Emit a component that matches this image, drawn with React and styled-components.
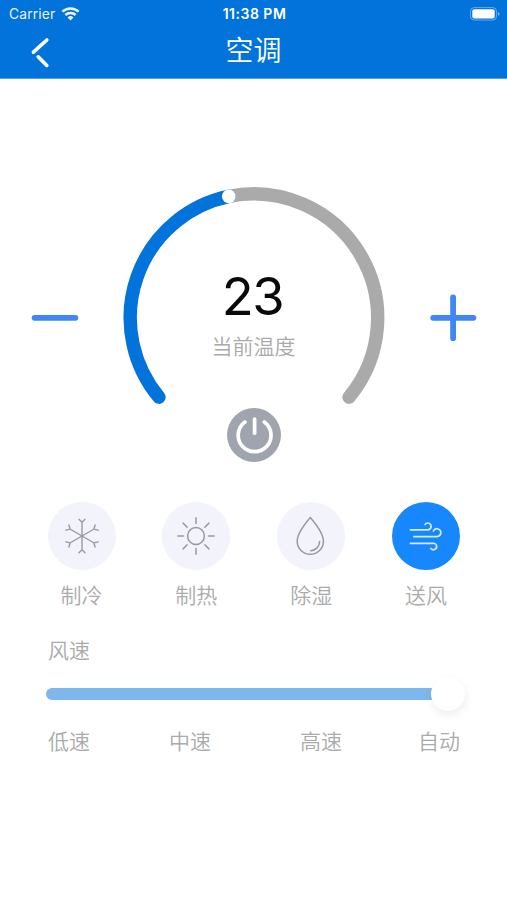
import React from 'react'
import styled, { createGlobalStyle, ThemeProvider } from 'styled-components'

const theme = {
    primary: '#0173db',
    accent: '#3e87f5',
    active: '#1787fd',
    track: '#7eb7eb',
    gray: '#aaaaaa',
    cjk: '"Noto Sans CJK SC", sans-serif',
    latin: 'Inter, "Noto Sans CJK SC", sans-serif',
};

const GlobalStyle = createGlobalStyle`
    * {
        box-sizing: border-box;
    }

    body {
        margin: 0;
        background: #ffffff;
    }

    svg {
        display: block;
    }
`;

const Screen = styled.div`
    width: 507px;
    height: 900px;
    overflow: hidden;
    background: #ffffff;
    font-family: ${props => props.theme.cjk};
    font-weight: 350;
`;

const Header = styled.header`
    height: 79px;
    background: ${props => props.theme.primary};
    color: #ffffff;
    border-bottom: 1px solid #4d9fe6;
`;

const StatusBar = styled.div`
    height: 27px;
    padding: 0 7px 0 9px;
    display: grid;
    grid-template-columns: 1fr auto 1fr;
    align-items: center;
    font-family: ${props => props.theme.latin};
`;

const Carrier = styled.div`
    display: flex;
    align-items: center;
    gap: 6px;
    font-size: 13.8px;
    font-weight: 400;
    letter-spacing: 0.15px;
    opacity: 0.92;
`;

const Clock = styled.div`
    font-size: 14px;
    font-weight: 600;
    letter-spacing: 0.5px;
`;

const Battery = styled.svg`
    justify-self: end;
`;

const NavBar = styled.div`
    height: 51px;
    padding: 0 30px;
    display: grid;
    grid-template-columns: 1fr auto 1fr;
    align-items: center;
`;

const BackButton = styled.button`
    width: 20px;
    height: 32px;
    padding: 0;
    border: 0;
    background: none;
`;

const Title = styled.h1`
    margin: 0 0 7px;
    font-size: 28px;
    line-height: 40px;
    font-weight: 350;
`;

const GaugeRow = styled.section`
    height: 220px;
    margin-top: 107px;
    padding: 0 29px;
    display: flex;
    justify-content: space-between;
`;

const StepButton = styled.button`
    width: 52px;
    height: 52px;
    margin-top: 106px;
    padding: 0;
    border: 0;
    background: none;
`;

const Gauge = styled.div`
    width: 264px;
    height: 220px;
    display: grid;

    > * {
        grid-area: 1 / 1;
    }
`;

const Reading = styled.div`
    padding-top: 80px;
    text-align: center;
`;

const Degrees = styled.div`
    height: 60px;
    padding-right: 2px;
    line-height: 60px;
    font-family: ${props => props.theme.latin};
    font-size: 52.5px;
    font-weight: 400;
    letter-spacing: -1.4px;
    color: #0a0a0a;
`;

const Caption = styled.div`
    height: 40px;
    line-height: 38px;
    font-size: 21px;
    color: ${props => props.theme.gray};
`;

const PowerButton = styled.button`
    display: block;
    width: 54px;
    height: 54px;
    margin: 2px auto 0;
    padding: 0;
    border: 0;
    border-radius: 50%;
    background: #9fa4af;
`;

const Modes = styled.section`
    margin-top: 40px;
    padding: 0 46.5px 0 47px;
    display: flex;
    justify-content: space-between;
`;

const Mode = styled.div`
    width: 69px;
    display: flex;
    flex-direction: column;
    align-items: center;
`;

const ModeIcon = styled.div`
    width: 68px;
    height: 68px;
    border-radius: 50%;
    background: ${props => props.$active ? props.theme.active : '#f3f4fb'};
    color: ${props => props.$active ? '#d9ebff' : '#999a9e'};
`;

const ModeLabel = styled.div`
    margin-top: 9px;
    font-size: 21px;
    line-height: 30px;
    color: ${props => props.theme.gray};
`;

const Speed = styled.section`
    margin-top: 25px;
    padding: 0 41px 0 46px;
`;

const SpeedTitle = styled.div`
    padding-left: 2px;
    font-size: 21px;
    line-height: 30px;
    color: ${props => props.theme.gray};
`;

const Slider = styled.div`
    height: 34px;
    margin-top: 13px;
    display: flex;
    align-items: center;
`;

const Fill = styled.div`
    width: 400px;
    height: 12.5px;
    margin-right: -15px;
    border-radius: 6.25px;
    background: ${props => props.theme.track};
`;

const Thumb = styled.div`
    width: 34px;
    height: 34px;
    border-radius: 50%;
    background: #ffffff;
    box-shadow: 1px 4px 10px rgba(0, 0, 0, 0.07);
`;

const Levels = styled.div`
    margin-top: 14px;
    padding-left: 2px;
    display: grid;
    grid-template-columns: 121px 131px 118px auto;
    font-size: 21px;
    line-height: 30px;
    white-space: nowrap;
    color: ${props => props.theme.gray};
`;

const Snow = () => (
    <svg width="68" height="68" fill="none" stroke="currentColor" strokeWidth="1.4" strokeLinecap="round">
        {[0, 60, 120, 180, 240, 300].map(angle => (
            <path key={angle} transform={`rotate(${angle} 34 34)`} d="M34 34V20M31 17.2L34 20.2L37 17.2" />
        ))}
    </svg>
);

const Sun = () => (
    <svg width="68" height="68" fill="none" stroke="currentColor" strokeWidth="1.5" strokeLinecap="round">
        <circle cx="34" cy="34" r="8.4" />
        {[0, 45, 90, 135, 180, 225, 270, 315].map(angle => (
            <path key={angle} transform={`rotate(${angle} 34 34)`} d="M34 21.5V15.8" />
        ))}
    </svg>
);

const Drop = () => (
    <svg width="68" height="68" fill="none" stroke="currentColor" strokeWidth="1.5" strokeLinecap="round" strokeLinejoin="round">
        <path d="M33.3 15.6C30.4 19 20.2 31.4 20.2 39.2A13.1 13.1 0 0 0 46.4 39.2C46.4 31.4 36.2 19 33.3 15.6Z" />
        <path d="M42.6 39.6C42.6 44.6 38.8 48.2 33.8 48.8" />
    </svg>
);

const Wind = () => (
    <svg width="68" height="68" fill="none" stroke="currentColor" strokeWidth="1.7" strokeLinecap="round">
        <path d="M18.4 27.8H35.6A3.4 3.4 0 1 0 33 22.4" />
        <path d="M21.9 34.6H45A3.9 3.9 0 1 0 41.4 29" />
        <path d="M18.4 41.3H41A3.2 3.2 0 1 1 38.9 46.4" />
    </svg>
);

const modes = [
    { label: '制冷', icon: <Snow /> },
    { label: '制热', icon: <Sun /> },
    { label: '除湿', icon: <Drop /> },
    { label: '送风', icon: <Wind />, active: true },
];

const levels = ['低速', '中速', '高速', '自动'];

const App = () => (
    <ThemeProvider theme={theme}>
        <GlobalStyle />
        <Screen>
            <Header>
                <StatusBar>
                    <Carrier>
                        Carrier
                        <svg width="19" height="14" viewBox="0 0 19 14" fill="none" stroke="#fff" strokeWidth="2.5">
                            <path d="M1.4 4.7A11.6 11.6 0 0 1 17.6 4.7" />
                            <path d="M4.4 8A7.2 7.2 0 0 1 14.6 8" />
                            <path d="M9.5 13.4L6.6 10.4A4.1 4.1 0 0 1 12.4 10.4Z" fill="#fff" stroke="none" />
                        </svg>
                    </Carrier>
                    <Clock>11:38 PM</Clock>
                    <Battery width="30" height="14">
                        <rect x="0.5" y="0.6" width="26" height="12.4" rx="3.6" fill="none" stroke="#fff" strokeOpacity="0.4" />
                        <rect x="2.3" y="2.2" width="22.4" height="9.2" rx="2" fill="#fff" />
                        <path d="M28 5Q29.6 5.8 29.6 6.9T28 8.8Z" fill="#fff" fillOpacity="0.5" />
                    </Battery>
                </StatusBar>
                <NavBar>
                    <BackButton aria-label="back">
                        <svg width="20" height="32" fill="none" stroke="#fff" strokeWidth="3.6" strokeLinecap="round">
                            <path d="M16.8 3L3.4 15.2" />
                            <path d="M8.2 19.8L16.8 28.4" />
                        </svg>
                    </BackButton>
                    <Title>空调</Title>
                </NavBar>
            </Header>
            <GaugeRow>
                <StepButton aria-label="minus">
                    <svg width="52" height="52" stroke={theme.accent} strokeWidth="5.8" strokeLinecap="round">
                        <path d="M5.6 25.8H46.4" />
                    </svg>
                </StepButton>
                <Gauge>
                    <svg width="264" height="220" fill="none" strokeWidth="13.4" strokeLinecap="round">
                        <path d="M106.8 10.4A124 124 0 0 1 227 211.2" stroke={theme.gray} />
                        <path d="M37 211.2A124 124 0 0 1 106.8 10.4" stroke={theme.primary} />
                        <circle cx="106.8" cy="10.4" r="6.8" fill="#fff" />
                    </svg>
                    <Reading>
                        <Degrees>23</Degrees>
                        <Caption>当前温度</Caption>
                    </Reading>
                </Gauge>
                <StepButton aria-label="plus">
                    <svg width="52" height="52" stroke={theme.accent} strokeWidth="5.8" strokeLinecap="round">
                        <path d="M7.2 25.8H47.4M27.1 5.4V46.2" />
                    </svg>
                </StepButton>
            </GaugeRow>
            <PowerButton aria-label="power">
                <svg width="54" height="54" fill="none" stroke="#fff" strokeWidth="3.7" strokeLinecap="round">
                    <path d="M17.9 14A16.4 16.4 0 1 0 37.3 14" />
                    <path d="M27.6 11.2V25.2" />
                </svg>
            </PowerButton>
            <Modes>
                {modes.map(mode => (
                    <Mode key={mode.label}>
                        <ModeIcon $active={mode.active}>{mode.icon}</ModeIcon>
                        <ModeLabel>{mode.label}</ModeLabel>
                    </Mode>
                ))}
            </Modes>
            <Speed>
                <SpeedTitle>风速</SpeedTitle>
                <Slider>
                    <Fill />
                    <Thumb />
                </Slider>
                <Levels>
                    {levels.map(level => <span key={level}>{level}</span>)}
                </Levels>
            </Speed>
        </Screen>
    </ThemeProvider>
);

export default App
